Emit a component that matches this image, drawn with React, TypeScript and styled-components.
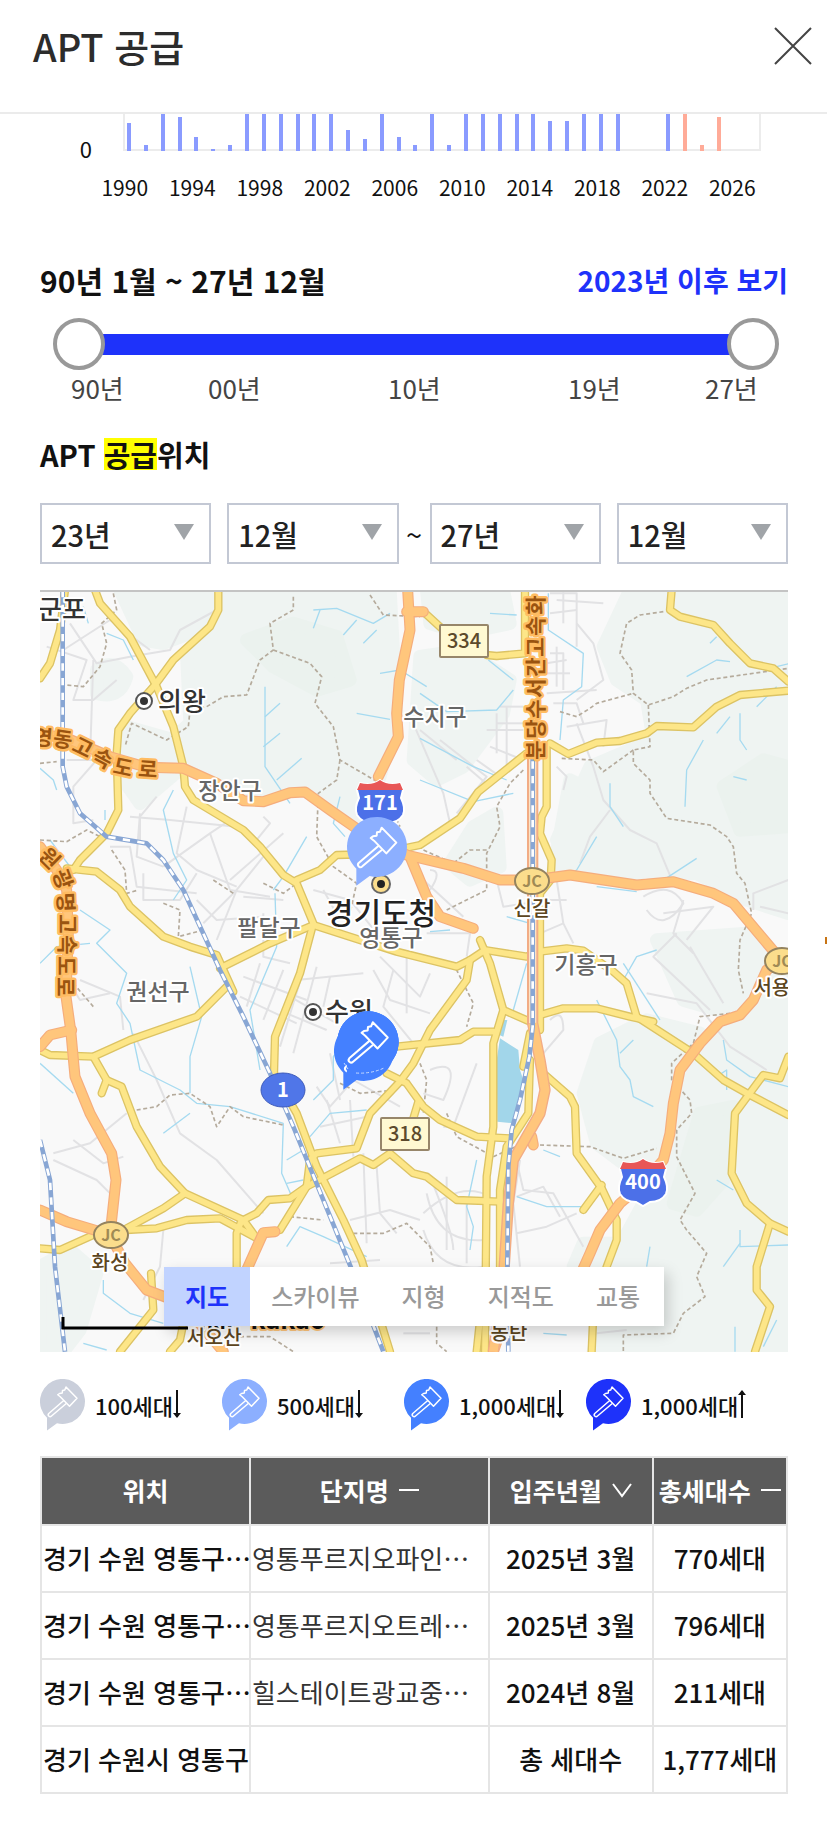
import React, { useState } from 'react';
import styled, { createGlobalStyle } from 'styled-components';

const Global = createGlobalStyle`
  * { box-sizing: border-box; }
  body {
    margin: 0;
    background: #fff;
    color: #111;
    font-family: "Noto Sans CJK KR", "Noto Sans", sans-serif;
    overflow-x: hidden;
  }
  button, select, input { font-family: inherit; margin: 0; }
`;

const Page = styled.div`
  width: 100%;
  padding-bottom: 32px;
`;

const Header = styled.header`
  display: flex;
  align-items: center;
  justify-content: space-between;
  height: 114px;
  padding: 0 13px 20px 33px;
  border-bottom: 2px solid #ebebeb;
`;

const Title = styled.h1`
  margin: 0;
  font-size: 38px;
  font-weight: 500;
  line-height: 48px;
  color: #2c2c2c;
`;

const CloseButton = styled.button`
  width: 42px;
  height: 42px;
  padding: 2px;
  border: 0;
  background: none;
  cursor: pointer;
  svg { display: block; width: 100%; height: 100%; }
`;

const ZeroLabel = styled.span`
  align-self: end;
  height: 16px;
  font-size: 22px;
  line-height: 26px;
  text-align: right;
`;

const PlotRow = styled.div`
  display: grid;
  grid-template-columns: 92px minmax(0, 1fr);
  column-gap: 31px;
  padding-right: 66px;
`;

const Plot = styled.svg`
  display: block;
  width: 100%;
  height: 37px;
`;

const YearAxis = styled.div`
  display: grid;
  grid-template-columns: repeat(10, minmax(0, 1fr));
  margin: 21px 61px 0 91px;
  font-size: 21px;
  line-height: 30px;
  text-align: center;
`;

const Body = styled.main`
  padding: 0 39px 0 40px;
`;

const RangeHead = styled.div`
  display: flex;
  align-items: center;
  justify-content: space-between;
  margin-top: 58px;
  line-height: 40px;
`;

const RangeText = styled.strong`
  font-size: 30px;
  font-weight: 700;
`;

const RecentLink = styled.a`
  font-size: 28px;
  font-weight: 700;
  color: #1e32fa;
  text-decoration: none;
`;

const Slider = styled.div`
  position: relative;
  height: 52px;
  margin: 18px 9px 0 13px;
  display: flex;
  align-items: center;
`;

const Track = styled.div`
  flex: 1;
  height: 21px;
  margin: 0 26px;
  background: #1e32fa;
`;

const Range = styled.input`
  position: absolute;
  inset: 0;
  width: 100%;
  height: 52px;
  appearance: none;
  background: none;
  pointer-events: none;
  &::-webkit-slider-thumb {
    appearance: none;
    box-sizing: border-box;
    width: 52px;
    height: 52px;
    border: 4px solid #999;
    border-radius: 50%;
    background: #fff;
    pointer-events: auto;
    cursor: pointer;
  }
`;

const Ticks = styled.div`
  display: grid;
  grid-template-columns: 52px 85fr 52px 128fr 52px 128fr 52px 85fr 52px;
  margin: 0 31px;
  font-size: 26px;
  line-height: 36px;
  color: #444;
  text-align: center;
  white-space: nowrap;
  span:nth-child(2) { grid-column: 3; }
  span:nth-child(3) { grid-column: 5; }
  span:nth-child(4) { grid-column: 7; }
  span:nth-child(5) { grid-column: 9; }
`;

const SectionTitle = styled.h2`
  margin: 28px 0 0;
  font-size: 29px;
  font-weight: 700;
  line-height: 40px;
  mark {
    display: inline-block;
    line-height: 32px;
    background: #ff0;
    color: inherit;
  }
`;

const Filters = styled.div`
  display: grid;
  grid-template-columns: 1fr 16px 1fr 31px 1fr 16px 1fr;
  align-items: center;
  margin-top: 29px;
`;

const SelectBox = styled.label<{ $col: number }>`
  grid-column: ${p => p.$col};
  grid-row: 1;
  display: grid;
  align-items: center;
  svg {
    grid-area: 1 / 1;
    justify-self: end;
    width: 20px;
    height: 16px;
    margin: 0 17px 3px 0;
    pointer-events: none;
  }
`;

const Select = styled.select`
  grid-area: 1 / 1;
  appearance: none;
  width: 100%;
  height: 61px;
  padding: 0 40px 0 9px;
  border: 2px solid #c3c8d4;
  border-radius: 0;
  background: #fff;
  color: #222;
  font-size: 29px;
  font-weight: 500;
`;

const Tilde = styled.span`
  grid-column: 4;
  grid-row: 1;
  font-size: 29px;
  line-height: 32px;
  text-align: center;
`;

const MapFrame = styled.section`
  position: relative;
  margin-top: 26px;
  border-top: 2px solid #c4c4c4;
`;

const MapSvg = styled.svg`
  display: block;
  width: 100%;
  height: auto;
`;

const MapTabs = styled.div`
  position: absolute;
  left: 124px;
  bottom: 26px;
  display: flex;
  padding-right: 3px;
  background: #fff;
  box-shadow: 4px 6px 14px rgba(0, 0, 0, 0.18);
`;

const MapTab = styled.button<{ $active?: boolean }>`
  height: 59px;
  padding: 0 21px 3px;
  border: 0;
  background: ${p => (p.$active ? '#c1d3ff' : '#fff')};
  color: ${p => (p.$active ? '#1e32fa' : '#999')};
  font-size: 24px;
  font-weight: ${p => (p.$active ? 700 : 500)};
  white-space: nowrap;
  cursor: pointer;
`;

const EdgeMark = styled.span`
  position: absolute;
  right: -39px;
  top: 345px;
  width: 2px;
  height: 7px;
  background: #c87414;
`;

const Legend = styled.ul`
  display: grid;
  grid-template-columns: repeat(3, minmax(0, 182fr)) minmax(0, 202fr);
  margin: 27px 0 0;
  padding: 0;
  list-style: none;
`;

const LegendItem = styled.li`
  display: flex;
  align-items: center;
  height: 52px;
  font-size: 22px;
  font-weight: 500;
  white-space: nowrap;
`;

const LegendPin = styled.svg`
  flex: none;
  width: 45px;
  height: 52px;
  margin-right: 10px;
`;

const Arrow = styled.svg<{ $up?: boolean }>`
  flex: none;
  width: 8px;
  height: 28px;
  margin-bottom: 3px;
  transform: ${p => (p.$up ? 'rotate(180deg)' : 'none')};
`;

const Table = styled.table`
  width: 100%;
  margin-top: 25px;
  border-collapse: collapse;
  table-layout: fixed;
  font-size: 26px;
  line-height: 36px;
  td, th {
    height: 67px;
    padding: 0 1px 2px;
    border: 2px solid #e5e5e5;
    white-space: nowrap;
    overflow: hidden;
    text-align: center;
    font-weight: 500;
  }
  th {
    height: 68px;
    background: #5b5b5b;
    color: #fff;
    font-size: 25px;
    font-weight: 700;
  }
`;

const LeftCell = styled.td<{ $muted?: boolean }>`
  && {
    text-align: left;
    color: ${p => (p.$muted ? '#333' : '#111')};
    font-weight: ${p => (p.$muted ? 400 : 500)};
  }
`;

const SortButton = styled.button`
  display: inline-flex;
  align-items: center;
  gap: 10px;
  padding: 0;
  border: 0;
  background: none;
  color: inherit;
  font-size: 25px;
  font-weight: 700;
  cursor: pointer;
  svg { width: 20px; height: 20px; }
`;

type Bar = { h: number; planned?: boolean };
const bars: Bar[] = [
  28, 6, 37, 34, 14, 2, 6, 37, 37, 37, 37, 37, 37, 21, 12, 37, 14, 6, 37,
  6, 37, 37, 37, 37, 37, 30, 30, 37, 37, 37, 0, 0, 37,
].map(h => ({ h } as Bar)).concat([
  { h: 37, planned: true }, { h: 6, planned: true }, { h: 34, planned: true },
]);
const years = [1990, 1994, 1998, 2002, 2006, 2010, 2014, 2018, 2022, 2026];

const pinOutline = 'M-62 65 A90 90 0 1 1 -22 87 L-62 116 Z';
const pinHead = 'M14 -58 L58 -13 L28 19 L-9 -19 L-19 -27 L-12 -32 L-1 -34 L0 -44 L9 -46 Z';
const pinHandle = 'M5 -4 L-55 48 Q-60 54 -54 59 Q-49 63 -44 58 L15 8';

const PinShape = ({ color }: { color: string }) => (
  <>
    <path d={pinOutline} fill={color} />
    <g fill="none" stroke="#fff" strokeWidth="6" strokeLinejoin="round">
      <path d={pinHead} />
      <path d={pinHandle} />
    </g>
  </>
);

const greens = [
  'M270 30 H1080 L1100 400 L1050 590 L990 745 L830 625 L640 650 L520 590 L465 540 L435 470 L480 430 L470 220 L560 130 L400 190 L340 180 Z',
  'M1190 30 H1420 L1440 130 L1300 160 L1200 130 Z',
  'M1170 230 L1300 210 L1440 300 L1420 400 L1300 560 L1220 600 L1150 540 Z',
  'M1800 30 H2275 V1000 L2150 960 L2000 880 L1870 880 L1700 830 L1580 780 L1680 560 L1870 480 L1850 360 L1760 300 L1720 200 Z',
  'M1570 870 L1620 600 L1700 640 L1750 760 L1900 850 L1780 900 Z',
  'M1710 1390 L1850 1320 L2010 1360 L1930 1560 L1900 1730 L1820 1780 L1700 1690 L1660 1540 Z',
  'M1880 1080 L2150 1060 L2275 1200 V2315 H1690 L1780 1980 L1900 1760 L1950 1500 L2130 1310 L1960 1260 Z',
  'M290 440 L430 480 L460 560 L330 670 L280 600 Z',
  'M200 270 Q250 230 290 290 Q270 360 200 340 Z',
  'M30 2060 L120 2010 L200 2080 L150 2250 L100 2315 H30 Z',
  'M1400 700 L1410 860 L1320 900 L1260 850 L1330 740 Z',
  'M1660 1990 L1760 1990 L1720 2060 L1630 2060 Z',
];
const deepGreens = [
  'M650 180 L790 130 L920 170 L960 300 L860 330 L730 260 Z',
  'M2080 620 L2200 540 L2275 560 V740 L2130 750 Z',
  'M2010 1600 L2110 1580 L2080 1800 L2000 1890 L1930 1870 Z',
];

const streets = [
  'M120 130 L200 250 L300 230 L420 210 L450 150 L560 90', 'M50 200 L170 240 L130 360 L190 360 L260 300',
  'M100 210 L240 120 L360 210', 'M190 240 L180 540', 'M110 540 L200 540 L130 620 L130 730 L190 720',
  'M300 710 L420 720 L620 740', 'M330 700 L320 830 L400 860', 'M380 650 L330 710 L330 780', 'M470 680 L440 820 L500 870 L620 920',
  'M400 860 L540 760 L600 720', 'M240 800 L300 800 L320 920 L500 940', 'M340 880 L340 960 L450 960 L500 880',
  'M540 760 L600 930 L720 950', 'M520 1030 L620 930 L700 830', 'M500 960 L560 1020 L700 1010', 'M600 900 L760 760',
  'M700 1000 L700 1130 L780 1150', 'M620 930 L560 1080', 'M640 950 L760 960', 'M700 710 L720 730 L680 780',
  'M850 930 L960 960 L1080 1110', 'M1050 1130 L1170 1250 L1200 1180', 'M880 930 L930 1020', 'M640 1190 L830 1260', 'M630 1250 L800 1330',
  'M690 1150 L650 1280', 'M760 1170 L700 1320', 'M830 1140 L750 1400', 'M860 1160 L790 1420', 'M900 1190 L880 1280', 'M800 1200 L1000 1180',
  'M780 1250 L920 1330', 'M770 1300 L890 1350', 'M1030 1170 L1080 1260 L1200 1300', 'M1090 1170 L1060 1280 L1150 1390', 'M1130 1130 L1130 1300',
  'M150 1200 L270 1250 L280 1350', 'M100 1180 L150 1260 L240 1240', 'M310 1360 L380 1500 L450 1660 L560 1740 L700 1900',
  'M70 1720 L180 1690 L290 1600', 'M130 1680 L220 1750 L280 1730', 'M70 1740 L200 1800 L250 1850', 'M400 1950 L390 2060 L340 2160',
  'M860 1520 L900 1580 L970 1500 L1110 1580', 'M900 1420 L930 1560', 'M960 1560 L970 1730', 'M890 1560 L930 1690', 'M870 1640 L1010 1610',
  'M960 1920 L1080 1890 L1170 1920', 'M1040 1760 L1050 1900 L1100 1960', 'M1060 1650 L1200 1650', 'M1000 1720 L1010 1990',
  'M1180 1900 Q1290 1800 1380 1850', 'M1190 1840 Q1220 1990 1360 1980', 'M1200 1790 Q1270 1960 1270 2010', 'M1180 1950 Q1220 2080 1360 2060',
  'M1250 1790 L1250 2010', 'M1310 1870 L1310 2050', 'M1340 1450 L1270 1640 L1240 1640', 'M1200 1470 Q1300 1430 1240 1560 L1180 1540',
  'M1450 1700 L1480 1830 L1570 1840 L1660 2000', 'M1460 1960 L1550 1940 L1640 1900', 'M1460 1850 L1540 1820 L1590 1910',
  'M1560 40 L1640 40 V200', 'M1580 60 L1720 70', 'M1600 30 V130', 'M1560 100 L1640 90', 'M1560 220 H1600 V330', 'M1550 250 L1610 240', 'M1550 280 H1620',
  'M1580 200 V320', 'M1550 340 L1700 330', 'M1640 130 L1690 190 L1720 300 L1640 360', 'M1570 370 L1640 370 L1660 430', 'M1610 440 L1730 420 L1720 500',
  'M1400 400 V520', 'M1370 450 H1480', 'M1380 500 L1480 540', 'M1430 380 V560', 'M1410 380 L1480 380', 'M1400 430 L1490 430', 'M1340 540 L1410 590',
  'M1310 560 L1380 620', 'M1230 480 L1370 590 L1280 700', 'M1170 450 L1280 540', 'M1150 430 L1240 640 L1260 730',
  'M1640 430 L1690 560 L1720 660 L1800 750 L1880 790 L1930 910', 'M1740 690 L1680 770 L1650 850', 'M1580 560 L1610 590 L1600 630',
  'M1840 950 Q1920 900 1960 970 Q1900 1060 1850 990', 'M1960 960 L1930 1060 L1990 1120', 'M1900 1000 L2050 980 L1970 1080', 'M1940 1060 L1870 1130 L2040 1290',
  'M1980 1100 L2080 1270', 'M1850 1240 L2000 1270 L2100 1400 L2210 1470', 'M2190 980 L2275 1000', 'M2170 990 V940 L2275 900',
  'M1580 900 L1600 1030 L1630 1090', 'M1560 960 L1610 960', 'M1530 1060 L1600 1030', 'M1200 870 Q1240 870 1200 930', 'M1180 900 L1300 1010',
  'M1190 1060 L1320 1060 L1310 1130', 'M1400 900 L1420 980 L1490 970', 'M1560 1320 Q1600 1280 1600 1350 L1540 1420', 'M1470 1740 L1450 1870 L1470 2060',
  'M900 2050 L1050 2040', 'M1120 2260 H1200', 'M1700 2260 L1790 2250',
];

const streams = [
  'M230 160 L280 180 L310 240', 'M160 80 L175 130', 'M850 90 L920 85 L1030 130 L1080 100', 'M850 145 L870 90', 'M940 165 L980 120', 'M1000 190 L1040 150',
  'M1050 280 L1110 270 L1190 320', 'M980 400 L1080 418', 'M705 320 V560 L780 670', 'M705 410 L750 370', 'M700 500 L750 460', 'M740 600 L815 535',
  'M30 565 L70 600 L80 630', 'M430 630 L400 690 L430 820 L470 900 L430 960', 'M225 690 V720', 'M930 650 L910 730 L945 770', 'M830 770 L760 890 L730 930',
  'M735 940 L740 1100 L660 1290 L690 1470', 'M30 1150 L80 1100 L180 1090', 'M150 990 L240 1050 L200 1090 L290 1180 L260 1270 L300 1330 L330 1470 L450 1530 L500 1570 L600 1580 L760 1630',
  'M760 1630 L755 1780 L790 1860', 'M480 1160 L515 1310 L480 1430 L480 1540', 'M480 1600 L400 1660', 'M30 1450 L130 1540', 'M60 780 L120 860',
  'M840 1670 L900 1600 L1010 1590', 'M770 1740 L820 1710', 'M770 1810 L820 1800', 'M850 1560 L910 1500 L910 1430 L940 1390', 'M220 2100 V2140 L300 2200 L400 2230', 'M160 2290 L230 2310',
  'M1170 340 L1250 395 L1400 390 L1450 330', 'M1375 240 L1450 300', 'M1555 40 V150 L1660 220 L1655 320 L1600 360 L1590 480', 'M1380 100 L1460 105', 'M1170 475 L1330 560 L1430 600',
  'M1170 600 L1330 665 L1450 640', 'M1970 290 L2060 240 L2100 245', 'M2040 190 L2060 170', 'M2180 380 L2240 320', 'M2130 400 L2130 480 L2150 510', 'M2020 480 L1970 570 L1965 680', 'M2060 460 L2100 410',
  'M2110 590 L2150 600', 'M2280 250 L2240 260', 'M1740 610 L1740 680 L1780 740', 'M1700 770 L1640 870 L1590 900', 'M2000 835 L1870 920', 'M1700 920 L1820 935', 'M1200 1055 L1260 1050', 'M1430 1010 L1500 1030',
  'M1490 1150 L1450 1290', 'M1880 1110 L1820 1130 L1780 1200', 'M1780 1150 L1890 1320', 'M1700 1260 L1760 1380 L1770 1460 L1800 1500 L1810 1550 L1870 1580', 'M1770 1420 L1810 1380', 'M2080 1380 L2090 1440 L2160 1490 L2275 1520', 'M2090 1500 L2060 1490 L2090 1470 V1530',
  'M1540 1710 L1590 1730', 'M1460 1850 L1550 1880 L1680 1880', 'M1340 1740 L1310 1880 L1330 1940 L1320 2010', 'M2060 1800 L2110 1830', 'M2130 1950 L2130 2000 L2275 1995', 'M1860 2000 L1850 2060', 'M2080 2060 L2130 1990', 'M1540 2260 L1610 2265',
  'M2115 2240 V2315', 'M2240 2220 L2200 2300', 'M770 2000 L810 1940 L880 1970 L1010 2030',
];

const borders = [
  'M250 40 L260 90 L215 130 L230 190 L210 260 L160 320 L110 315', 'M790 50 L790 90 L720 130 L730 210 L690 240 L650 345 L580 350 L530 380 L480 390 L475 440 L410 480 L305 430 L285 500',
  'M730 210 L840 250 L875 290 L855 370 L910 440 L930 540 L1050 610 L1110 740', 'M930 540 L920 600 L865 640 L860 770 L910 860 L980 910 L960 1000',
  'M1020 45 L1060 105 L1170 110', 'M30 780 L110 785 L170 750 L210 770', 'M30 550 L80 545', 'M245 810 L285 870 L290 940 L325 930', 'M550 900 L610 940',
  'M400 970 L450 990 L445 1070 L520 1050', 'M130 1210 L190 1280', 'M320 1590 L380 1580 L420 1545 L480 1540 L540 1580 L560 1640 L600 1580 L640 1610 L760 1635', 'M700 910 L760 940 L800 910',
  'M1590 395 L1640 410 L1680 385 L1700 370 L1810 340', 'M1900 95 L1830 105 L1790 130 L1770 220 L1805 270 L1810 340 L1855 375 L1930 350 L1970 325 L2030 300 L2275 265',
  'M1855 375 L1860 500 L1810 510 L1810 550 L1860 600 L1860 640 L1910 715 L2040 735 L2090 770 L2110 800 L2120 880 L2145 910 L2165 1000 L2130 1080 L2125 1170 L2140 1240',
  'M2100 1300 L2010 1310 L1990 1390 L1925 1450 V1500 L1980 1560 L1985 1600 L1940 1650 L1940 1730 L1995 1840 L1950 1920 L1970 1950 L2030 2020 L2000 2090 L2025 2150 L1960 2200 L1930 2260 L1780 2265 L1780 2315',
  'M1530 1695 L1680 1700 L1780 1735 L1880 1705', 'M1810 510 L1720 575 L1690 540 L1590 535', 'M1480 570 L1440 610 L1400 680 L1410 740 L1370 820 L1370 930 L1250 990', 'M1370 810 L1320 810 L1270 850 L1180 810',
  'M1270 1150 L1330 1270 L1310 1340', 'M1170 1450 L1190 1500 L1180 1600', 'M1250 1600 L1280 1670 L1390 1730', 'M1390 1730 L1480 1690', 'M970 1960 L1060 1960 L1130 1930 L1200 2000 L1210 2050', 'M1080 2100 L1200 2130', 'M570 2270 L720 2270 L790 2315', 'M930 1510 L990 1540 L1100 1530', 'M780 1910 L880 1920',
  'M1220 2240 V2290 L1250 2315',
];

const yellowRoads = [
  'M195 30 L210 70 L300 170 L380 320 L430 440 L460 560 L465 620 L490 660 L640 750 L690 800 L760 885 L800 910 L850 1030 L810 1180 L735 1370 L732 1480 L800 1600 L860 1760 L940 1920 L995 2040 L1080 2315',
  'M565 30 V90 L540 140 L430 240 L375 315 L300 400 L265 450 L260 520 L265 690 L230 760 L150 840 L130 870',
  'M105 30 L90 150 L60 250 L30 295', 'M110 865 L200 875 L270 930 L300 980 L400 1070 L480 1100 L560 1125 L610 1235',
  'M570 1165 L720 1090 L850 1035 L990 1080 L1100 1115 L1280 1160 L1320 1140 L1365 1110 L1490 1130 L1530 1115 L1610 1105 L1660 1112 L1750 1175 L1790 1210 L1820 1310 L1990 1420 L2080 1500 L2160 1545 L2275 1605',
  'M800 900 L870 870 L920 825 L1040 822 L1170 795 L1290 715 L1345 635 L1490 520',
  'M1560 490 L1615 522 L1700 488 L1770 483 L1850 460 L1880 438 L1990 442 L2060 380 L2130 345 L2275 332',
  'M1925 30 L1920 90 L1950 110 L2050 135 L2100 190 L2160 250 L2230 265 L2275 305', 'M1180 95 L1235 145', 'M1370 225 L1400 228 L1485 220 V30',
  'M1550 500 V680 L1535 710 L1530 760 L1565 840 L1562 900 L1530 940 V1350', 'M30 1410 L60 1425 L190 1430 L300 1380 L500 1310 L590 1220', 'M190 1430 L230 1500 L275 1520 L320 1640 L390 1760 L465 1840 L640 1920 L680 1975', 'M230 1500 L215 1540',
  'M465 1840 L400 1885 L290 1945', 'M290 1950 L380 1945 L470 1920 L570 1915 L690 1980', 'M640 1920 L680 1900 L715 1860 L780 1855 L830 1820 L990 1735 L1030 1755 L1080 1720 L1150 1780 L1190 1790 L1280 1860 L1410 1865', 'M635 1920 L620 1960 V2070',
  'M750 1950 L830 1820 L840 1740 L860 1720 L980 1705 L1020 1600 L1110 1505 L1150 1450 L1200 1350 L1310 1200 L1320 1140', 'M1070 1480 L1130 1510 L1180 1580 L1230 1620 L1340 1670 L1440 1675', 'M1165 1565 L1150 1615', 'M1100 1400 L1290 1380 L1330 1355 H1390',
  'M1350 1080 L1380 1150 L1420 1290 L1390 1390 V1640 L1370 1790 L1365 2315', 'M1420 1290 L1500 1325', 'M1530 1305 L1600 1285 L1700 1285 L1800 1310 L1870 1325',
  'M2275 1430 L2250 1495 L2200 1485 L2115 1600 L2105 1780 L2150 1870 L2220 1930 L2275 1955', 'M2220 1930 L2180 2060 V2130 L2220 2180 L2175 2315', 'M1540 1480 L1620 1550 L1635 1580 L1640 1720 L1715 1825 L1760 1920 V1980 L1730 2060 L1690 2200 L1685 2315', 'M1715 1815 L1660 1890',
  'M1500 1440 L1495 1600 L1430 1700 L1410 1830 V2060', 'M1490 1420 L1500 1360 L1480 1460', 'M30 2005 L90 2010 L190 1965', 'M363 2080 L370 2190 L270 2315', 'M460 2230 L450 2280 L420 2315', 'M1350 2220 L1340 2315',
];
const orangeRoads = [
  'M1133 30 L1140 150 L1108 300 L1100 400 L1105 470 L1045 590', 'M1130 95 H1180', 'M30 465 L100 470 L240 530 L350 562 L460 565 L560 610 L640 662 L700 665 L780 638 L825 636 L900 690 L1000 760 L1130 825 L1300 865 L1410 900 L1510 900 L1620 885 L1820 915 L1930 905 L2050 940 L2110 970 L2190 1065 L2255 1142 L2210 1170 L2170 1260 L2130 1305 L2070 1325 L2010 1390 L1950 1470 L1930 1570 L1920 1660 L1900 1740 L1840 1810 L1770 1870 L1710 1950 L1680 2020 L1600 2200',
  'M1140 830 L1190 950 L1230 1010 L1330 1045', 'M30 800 L80 870 L110 930 L115 1060 L108 1250 L122 1350 L135 1490 L180 1600 L245 1720 L258 1800 L240 1965 L285 2050 L350 2130 L430 2160 L500 2220 L580 2315', 'M30 1400 L60 1365 L125 1350', 'M30 1890 L110 1925 L243 1965', 'M650 2070 L700 1958 L735 1955', 'M1505 1670 L1510 1695', 'M1390 2315 L1430 2200',
];
const expressRail = 'M1508 500 V1330 L1530 1440 L1545 1530 L1530 1600 L1490 1670 L1450 1740 L1435 1870 L1420 2100 L1390 2315';
const rails = [
  'M98 30 V560 L110 620 L150 700 L230 770 L350 790 L400 840 L460 930 L570 1170 L640 1310 L720 1480 L790 1640 L970 2080 L1060 2315', 'M30 1680 L60 1800 L75 2060 L105 2315',
  'M1508 500 V1340 L1498 1430 L1470 1560 L1445 1650 L1435 1760 L1432 2060 L1435 2315',
];

type Glyph = [string, number, number, number];
const roadNames: Glyph[] = [
  ['영', 3, 145, 5], ['동', 23, 147, 8], ['고', 43, 155, 26], ['속', 63, 166, 28], ['도', 83, 175, 12], ['로', 108, 177, 4],
  ['원', 10, 266, 45], ['광', 23, 287, 70], ['명', 26, 310, 88], ['고', 28, 332, 90], ['속', 28, 353, 90], ['도', 27, 374, 90], ['로', 26, 395, 90],
  ['분', 495, 158, -90], ['당', 495, 137, -90], ['수', 495, 117, -90], ['서', 495, 96, -90], ['간', 495, 75, -90], ['고', 495, 55, -90], ['속', 495, 34, -90], ['화', 495, 13, -90],
];

type Place = [string, number, number, number, string];
const places: Place[] = [
  ['군포', 22, 20, 26, '#333'], ['의왕', 142, 112, 26, '#333'], ['수원', 309, 422, 26, '#333'], ['경기도청', 341, 323, 30, '#222'],
  ['수지구', 395, 127, 23, '#666'], ['장안구', 190, 201, 23, '#666'], ['팔달구', 229, 338, 23, '#666'], ['영통구', 351, 348, 23, '#666'],
  ['권선구', 118, 402, 23, '#666'], ['기흥구', 546, 375, 23, '#666'],
  ['신갈', 492, 319, 20, '#5c4520'], ['화성', 70, 673, 20, '#5c4520'], ['서용인', 741, 398, 20, '#5c4520'], ['동탄', 469, 743, 20, '#5c4520'], ['서오산', 174, 748, 20, '#5c4520'],
];

const Shield = ({ x, y, n }: { x: number; y: number; n: string }) => (
  <g transform={`translate(${x} ${y})`}>
    <path d="M-23 -13 L-20 -20 Q-8 -17 0 -23 Q8 -17 20 -20 L23 -13 L21 -5 Q26 5 23 12 Q18 20 7 20 L0 24 L-7 20 Q-18 20 -23 12 Q-26 5 -21 -5 Z" fill="#4c70e8" stroke="#fff" strokeWidth="2" />
    <path d="M-23 -13 L-20 -20 Q-8 -17 0 -23 Q8 -17 20 -20 L23 -13 Z" fill="#e85656" />
    <text dy="7" fontSize="20" fontWeight="700" fill="#fff" textAnchor="middle">{n}</text>
  </g>
);

const RouteBox = ({ x, y, n }: { x: number; y: number; n: string }) => (
  <g transform={`translate(${x} ${y})`}>
    <rect x="-24" y="-16" width="48" height="32" rx="1" fill="#fff9d2" stroke="#97866a" strokeWidth="2" />
    <text dy="7" fontSize="20" fontWeight="500" fill="#5c4a2c" textAnchor="middle">{n}</text>
  </g>
);

const Junction = ({ x, y }: { x: number; y: number }) => (
  <g transform={`translate(${x} ${y})`}>
    <ellipse rx="17" ry="13" fill="#fbdd8c" stroke="#94835f" strokeWidth="2" />
    <text dy="6" fontSize="16" fontWeight="700" fill="#a08a54" textAnchor="middle">JC</text>
  </g>
);

const Lines = ({ d, color, width, dash }: { d: string[]; color: string; width: number; dash?: string }) => (
  <g stroke={color} strokeWidth={width} strokeDasharray={dash}>
    {d.map(path => <path key={path} d={path} />)}
  </g>
);

const DistrictMap = () => (
  <MapSvg viewBox="0 0 748 760" role="img" aria-label="경기 수원 지도">
    <rect width="748" height="760" fill="#f9f9f9" />
    <g transform="scale(0.33333) translate(-30 -36)" fill="none" strokeLinejoin="round">
      {greens.map(d => <path key={d} d={d} fill="#eff4f2" stroke="#eff4f2" strokeWidth="40" />)}
      {deepGreens.map(d => <path key={d} d={d} fill="#ebf2ee" stroke="#ebf2ee" strokeWidth="40" />)}
      <path d="M1410 1375 L1465 1410 L1470 1470 L1480 1500 L1450 1630 L1402 1625 L1400 1440 Z M1420 1320 H1432 L1420 1370 L1408 1365 Z" fill="#a2d6ea" />
      <Lines d={streets} color="#e2e2e4" width={6} />
      <Lines d={streams} color="#a5daf0" width={4} />
      <Lines d={borders} color="#b5ab9c" width={5} dash="12 8" />
      <g strokeLinecap="round">
        <Lines d={yellowRoads} color="#dcc364" width={25} />
        <Lines d={yellowRoads} color="#fde688" width={17} />
        <Lines d={orangeRoads} color="#f5ad7c" width={33} />
        <Lines d={orangeRoads} color="#ffc67c" width={26} />
      </g>
      <path d={expressRail} stroke="#f2ac85" strokeWidth={34} />
      <path d="M1508 500 V1330" stroke="#fbe3c6" strokeWidth={22} />
      <path d="M1508 1330 L1530 1440 L1545 1530 L1530 1600 L1490 1670 L1450 1740 L1435 1870 L1420 2100 L1390 2315" stroke="#ffc67c" strokeWidth={26} />
      <Lines d={rails} color="#88a6d4" width={14} />
      <Lines d={rails} color="#fff" width={8} dash="22 22" />
    </g>
    <g textAnchor="middle">
      <g fontSize="21" fontWeight="700" fill="#9a5410" stroke="#ffbc62" strokeWidth="5" strokeLinejoin="round" paintOrder="stroke">
        {roadNames.map(([c, x, y, r]) => (
          <text key={`${x}-${y}`} transform={`translate(${x} ${y}) rotate(${r})`} dy="8">{c}</text>
        ))}
      </g>
      <Shield x={340} y={211} n="171" />
      <Shield x={603} y={590} n="400" />
      <RouteBox x={424} y={49} n="334" />
      <RouteBox x={365} y={542} n="318" />
      <ellipse cx="243" cy="498" rx="22" ry="17" fill="#5076e8" stroke="#3f5cba" strokeWidth="1" />
      <text x="243" y="505" fontSize="20" fontWeight="700" fill="#fff">1</text>
      <Junction x={492} y={289} />
      <Junction x={71} y={643} />
      <Junction x={742} y={369} />
      {[[104, 109], [273, 420]].map(([x, y]) => (
        <g key={x}>
          <circle cx={x} cy={y} r="8" fill="#fff" stroke="#555" strokeWidth="2" />
          <circle cx={x} cy={y} r="4" fill="#333" />
        </g>
      ))}
      <circle cx="341" cy="292" r="9" fill="#fbdd8c" stroke="#666" strokeWidth="2" />
      <circle cx="341" cy="292" r="4" fill="#222" />
      <g stroke="#fff" strokeWidth="4" strokeLinejoin="round" paintOrder="stroke" fontWeight="500">
        <text x="177" y="737" fontSize="21" fontWeight="700" fill="#111">4km</text>
        <text x="248" y="737" fontSize="25" fontWeight="700" fill="#111" stroke="#ffc67c">kakao</text>
        {places.map(([name, x, y, size, color]) => (
          <text key={name} x={x} y={y - 2} dy={Math.round(size * 0.36)} fontSize={size} fill={color}>{name}</text>
        ))}
      </g>
      <path d="M23 725 V736 H148" fill="none" stroke="#000" strokeWidth="3" />
    </g>
    <g transform="translate(337 255) scale(0.33333)"><PinShape color="#8cafff" /></g>
    <g transform="translate(324 459) scale(0.33333)"><PinShape color="#4480ff" /></g>
    <g transform="translate(328 450) scale(0.34)">
      <path d={pinOutline} fill="#4480ff" />
      <circle r="90" fill="#4480ff" />
      <PinShape color="#4480ff" />
    </g>
    <path d="M304 471 L308 477 M316 481 Q331 482 344 476" fill="none" stroke="#c7daff" strokeWidth="1" strokeDasharray="3 2" />
  </MapSvg>
);

const legend = [
  { color: '#cacfdb', text: '100세대' },
  { color: '#8cafff', text: '500세대' },
  { color: '#4480ff', text: '1,000세대' },
  { color: '#1e32fa', text: '1,000세대', up: true },
];

const rows = [
  ['경기 수원 영통구…', '영통푸르지오파인…', '2025년 3월', '770세대'],
  ['경기 수원 영통구…', '영통푸르지오트레…', '2025년 3월', '796세대'],
  ['경기 수원 영통구…', '힐스테이트광교중…', '2024년 8월', '211세대'],
  ['경기 수원시 영통구', '', '총 세대수', '1,777세대'],
];

const tabs = ['지도', '스카이뷰', '지형', '지적도', '교통'];

const filters = [
  { label: '시작 연도', value: '23년', col: 1 },
  { label: '시작 월', value: '12월', col: 3 },
  { label: '종료 연도', value: '27년', col: 5 },
  { label: '종료 월', value: '12월', col: 7 },
];

const Dash = () => (
  <svg viewBox="0 0 20 20" aria-hidden="true"><path d="M0 10 H20" stroke="#fff" strokeWidth="2" /></svg>
);
const Chevron = () => (
  <svg viewBox="0 0 20 20" aria-hidden="true"><path d="M1 4 L10 16 L19 4" fill="none" stroke="#fff" strokeWidth="2" /></svg>
);

export default function App() {
  const [tab, setTab] = useState('지도');
  const [from, setFrom] = useState(0);
  const [to, setTo] = useState(100);
  return (
    <Page lang="ko">
      <Global />
      <Header>
        <Title>APT 공급</Title>
        <CloseButton aria-label="닫기">
          <svg viewBox="0 0 38 38"><path d="M1 1 L37 37 M37 1 L1 37" stroke="#444" strokeWidth="2" /></svg>
        </CloseButton>
      </Header>

      <section aria-label="연도별 공급">
        <PlotRow>
          <ZeroLabel>0</ZeroLabel>
          <Plot viewBox="0 0 638 37" preserveAspectRatio="none">
            <path d="M1 0 V36 H637 V0" fill="none" stroke="#ececec" strokeWidth="2" />
            {bars.map((b, i) => (
              <rect key={i} x={4 + Math.round(i * 16.85)} y={37 - b.h} width="4" height={b.h} fill={b.planned ? '#ffab98' : '#8a9bff'} />
            ))}
          </Plot>
        </PlotRow>
        <YearAxis>{years.map(y => <span key={y}>{y}</span>)}</YearAxis>
      </section>

      <Body>
        <RangeHead>
          <RangeText>90년 1월 ~ 27년 12월</RangeText>
          <RecentLink href="#recent">2023년 이후 보기</RecentLink>
        </RangeHead>
        <Slider>
          <Track />
          <Range type="range" aria-label="시작 시점" value={from} onChange={e => setFrom(Math.min(+e.target.value, to))} />
          <Range type="range" aria-label="종료 시점" value={to} onChange={e => setTo(Math.max(+e.target.value, from))} />
        </Slider>
        <Ticks>
          {['90년', '00년', '10년', '19년', '27년'].map(t => <span key={t}>{t}</span>)}
        </Ticks>

        <SectionTitle>APT <mark>공급</mark>위치</SectionTitle>
        <Filters>
          {filters.map(f => (
            <SelectBox key={f.col} $col={f.col}>
              <Select aria-label={f.label} defaultValue={f.value}>
                <option>{f.value}</option>
              </Select>
              <svg viewBox="0 0 20 16" aria-hidden="true"><path d="M0 0 H20 L10 16 Z" fill="#a0a4a8" /></svg>
            </SelectBox>
          ))}
          <Tilde>~</Tilde>
        </Filters>

        <MapFrame>
          <DistrictMap />
          <MapTabs>
            {tabs.map(t => (
              <MapTab key={t} $active={t === tab} aria-pressed={t === tab} onClick={() => setTab(t)}>{t}</MapTab>
            ))}
          </MapTabs>
          <EdgeMark />
        </MapFrame>

        <Legend>
          {legend.map(l => (
            <LegendItem key={l.color}>
              <LegendPin viewBox="-90 -90 180 208" aria-hidden="true"><PinShape color={l.color} /></LegendPin>
              {l.text}
              <Arrow $up={l.up} viewBox="0 0 8 28" aria-hidden="true">
                <path d="M4 0 V27" stroke="#111" strokeWidth="2" />
                <path d="M0 23 H8 L4 28 Z" fill="#111" />
              </Arrow>
            </LegendItem>
          ))}
        </Legend>

        <Table>
          <colgroup>
            <col style={{ width: '28%' }} />
            <col style={{ width: '32%' }} />
            <col style={{ width: '22%' }} />
            <col style={{ width: '18%' }} />
          </colgroup>
          <thead>
            <tr>
              <th scope="col">위치</th>
              <th scope="col"><SortButton>단지명<Dash /></SortButton></th>
              <th scope="col"><SortButton>입주년월<Chevron /></SortButton></th>
              <th scope="col"><SortButton>총세대수<Dash /></SortButton></th>
            </tr>
          </thead>
          <tbody>
            {rows.map((r, i) => (
              <tr key={i}>
                <LeftCell>{r[0]}</LeftCell>
                <LeftCell $muted>{r[1]}</LeftCell>
                <td>{r[2]}</td>
                <td>{r[3]}</td>
              </tr>
            ))}
          </tbody>
        </Table>
      </Body>
    </Page>
  );
}
